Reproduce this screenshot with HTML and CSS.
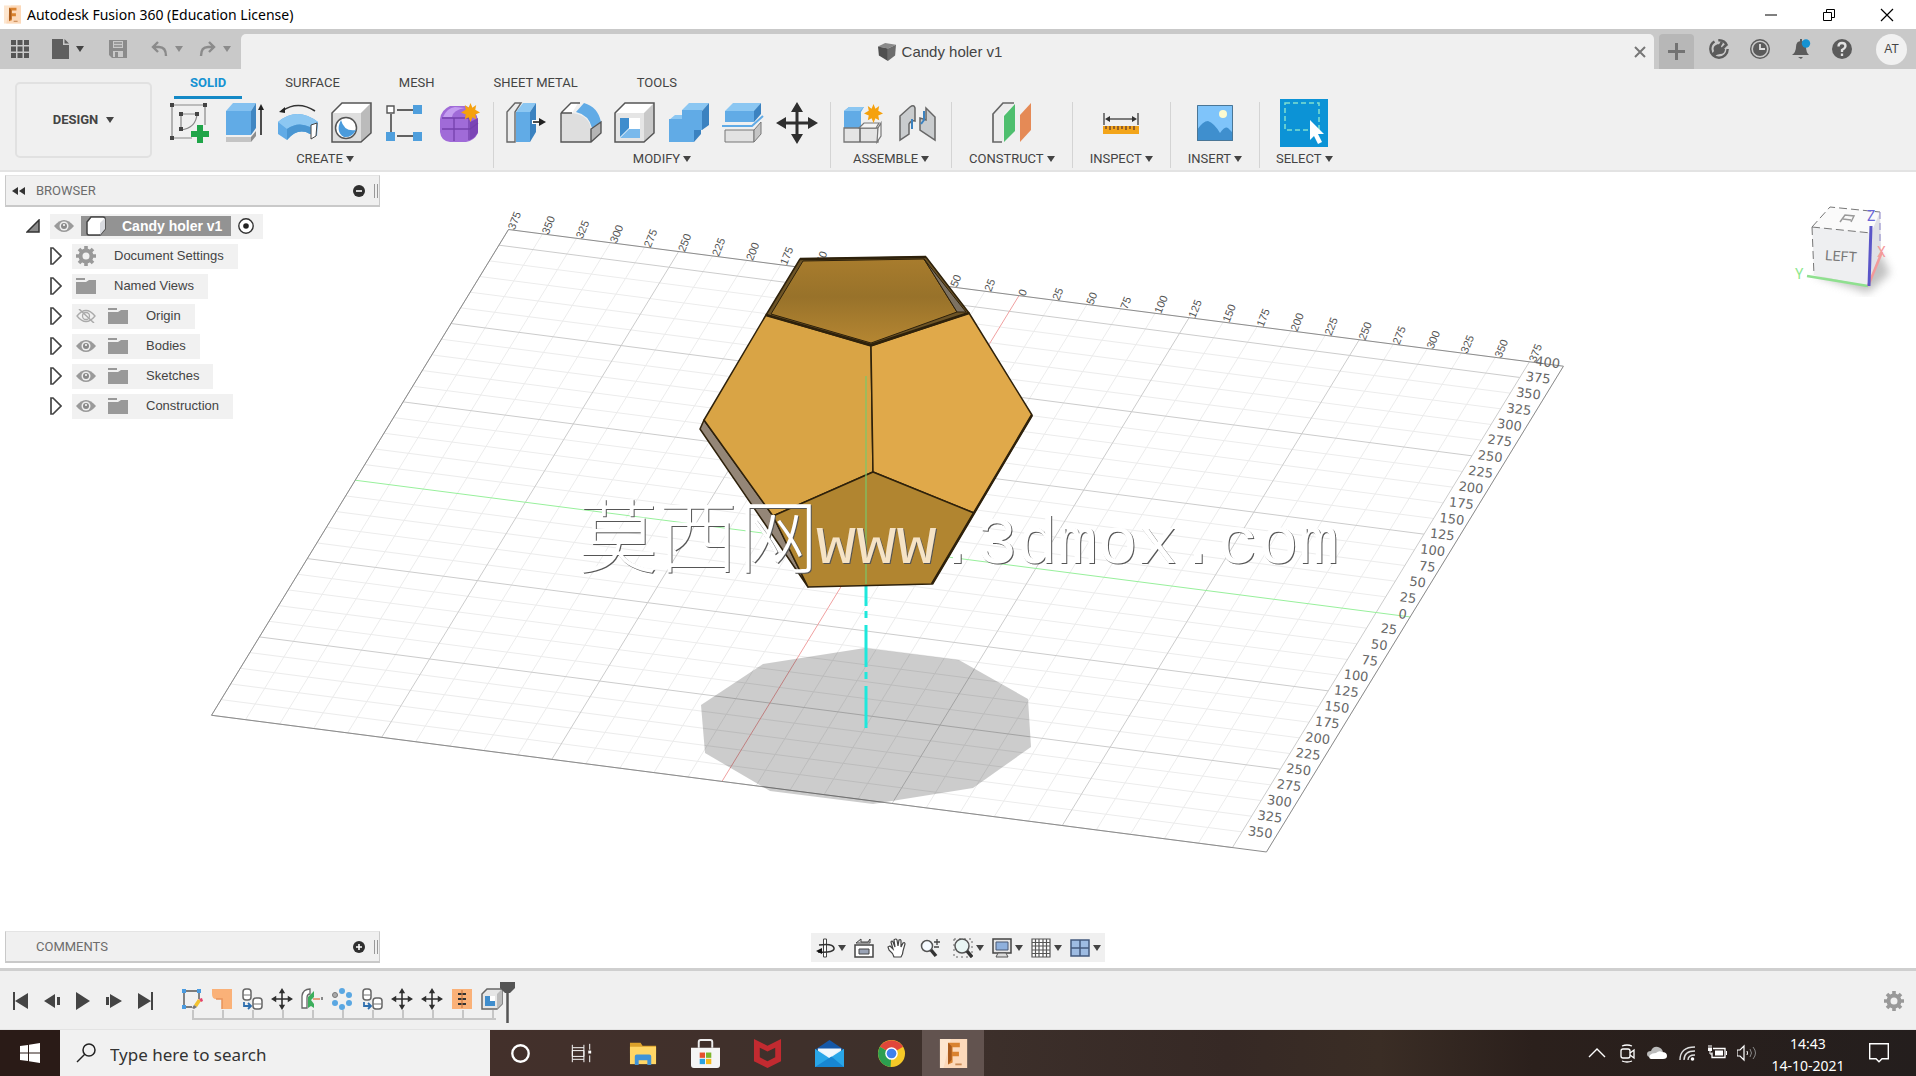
FILE: index.html
```html
<!DOCTYPE html>
<html lang="en">
<head>
<meta charset="utf-8">
<title>Autodesk Fusion 360 (Education License)</title>
<link rel="stylesheet" href="styles.css">
</head>
<body>

<svg class="defs" aria-hidden="true">
  <symbol id="i-fusion" viewBox="0 0 30 32"><rect width="30" height="32" fill="#fde6cf"/><path d="M4 32 12 0h18v32z" fill="#fbd3b0" opacity=".7"/><path d="M9 4h13v5h-8v5h7v5h-7v7l-5 2z" fill="#d9822f"/><path d="M9 4l4 4v15l-4 5z" fill="#a85a1c"/><path d="M17 28h7" stroke="#c98a55" stroke-width="2"/></symbol>
  <symbol id="i-eye" viewBox="0 0 20 14"><path d="M0 7Q10-5 20 7 10 19 0 7z" fill="#9a9a9a"/><circle cx="10" cy="7" r="4.500" fill="#efefef"/><circle cx="10" cy="7" r="3" fill="#8a8a8a"/><circle cx="10" cy="6" r="1" fill="#fff"/></symbol>
  <symbol id="i-eye-off" viewBox="0 0 20 14"><path d="M1 7Q10-4 19 7 10 18 1 7z" fill="none" stroke="#aaa" stroke-width="1.300"/><circle cx="10" cy="7" r="3.500" fill="none" stroke="#aaa" stroke-width="1.300"/><path d="M3 0l15 14" stroke="#aaa" stroke-width="1.500"/></symbol>
  <symbol id="i-folder" viewBox="0 0 20 16"><path d="M0 0h9v2H0zM0 4h10l3-2h7v14H0z" fill="#999"/></symbol>
  <symbol id="i-gear" viewBox="0 0 20 20"><circle cx="10" cy="10" r="5.500" fill="none" stroke="#999" stroke-width="4"/><path d="M10 0v4M10 16v4M0 10h4M16 10h4M3 3l3 3M14 14l3 3M17 3l-3 3M6 14l-3 3" stroke="#999" stroke-width="3.600"/></symbol>
  <symbol id="i-expand" viewBox="0 0 12 18"><path d="M1 1h2l8 8-8 8H1z" fill="#fff" stroke="#444" stroke-width="1.700"/></symbol>
  <symbol id="i-move" viewBox="0 0 42 42"><path d="M21 6v30M6 21h30" stroke="#2f2f2f" stroke-width="3"/><path d="M21 0l6 10H15zM21 42l6-10H15zM0 21l10-6v12zM42 21l-10-6v12z" fill="#2f2f2f"/></symbol>
  <symbol id="i-star" viewBox="0 0 20 20"><path d="M10 0l2 5 4-3-1 5 5 3-5 2 1 5-4-2-2 5-2-5-4 2 1-5-5-2 5-3-1-5 4 3z" fill="#f5a10d"/></symbol>
  <symbol id="i-copy" viewBox="0 0 22 22"><rect x="2" y="1" width="8" height="11" rx="3" fill="#fff" stroke="#666" stroke-width="1.500"/><path d="M2 7h8" stroke="#777"/><rect x="12" y="10" width="9" height="11" rx="3" fill="#fff" stroke="#666" stroke-width="1.500"/><path d="M12 16h9" stroke="#777"/><path d="M3 14v4h6M7 15l3 3-3 3" fill="none" stroke="#2f6fae" stroke-width="1.800"/></symbol>
</svg>

<header class="titlebar">
  <svg class="logo"><use href="#i-fusion"/></svg>
  <h1 class="app-name">Autodesk Fusion 360 (Education License)</h1>
  <div class="window-controls">
    <button aria-label="Minimize"><svg viewBox="0 0 14 14"><path d="M1 7h12" stroke="#000"/></svg></button>
    <button aria-label="Restore"><svg viewBox="0 0 14 14"><path d="M1.500 4.500h8v8h-8zM4.500 4V1.500h8v8H10" fill="none" stroke="#000"/></svg></button>
    <button aria-label="Close"><svg viewBox="0 0 14 14"><path d="M1 1l12 12M13 1L1 13" stroke="#000" stroke-width="1.200"/></svg></button>
  </div>
</header>

<div class="appbar">
  <div class="quick">
    <button class="q-grid" aria-label="Data panel"><svg width="18" height="18" viewBox="0 0 18 18" fill="#555"><path d="M0 0h5v5H0zM6.500 0h5v5h-5zM13 0h5v5h-5zM0 6.500h5v5H0zM6.500 6.500h5v5h-5zM13 6.500h5v5h-5zM0 13h5v5H0zM6.500 13h5v5h-5zM13 13h5v5h-5z"/></svg></button>
    <button class="q-file" aria-label="File"><svg width="17" height="20" viewBox="0 0 17 20"><path d="M0 0h11v6h6v14H0z" fill="#5f5f5f"/><path d="M12.500 0l4.500 4.500h-4.500z" fill="#5f5f5f"/></svg><span class="caret"></span></button>
    <button class="q-save" aria-label="Save"><svg width="18" height="18" viewBox="0 0 18 18"><path d="M0 0h18v18H3l-3-3z" fill="#8b8b8b"/><path d="M4 1h10v7H4zM4 11h10v6H4z" fill="#c9c9c9"/><path d="M5 3h8M5 6h8" stroke="#8b8b8b" stroke-width="1.500"/><path d="M6 12h3v5H6z" fill="#8b8b8b"/></svg></button>
    <button class="q-undo" aria-label="Undo"><svg width="17" height="16" viewBox="0 0 17 16"><path d="M7 1L2 6l5 5M2 6h6q7 0 7 9" fill="none" stroke="#8b8b8b" stroke-width="2.400"/></svg><span class="caret pale"></span></button>
    <button class="q-redo" aria-label="Redo"><svg width="17" height="16" viewBox="0 0 17 16"><path d="M10 1l5 5-5 5M15 6H9q-7 0-7 9" fill="none" stroke="#8b8b8b" stroke-width="2.400"/></svg><span class="caret pale"></span></button>
  </div>
  <div class="doc-tab">
    <div class="doc-name"><svg width="20" height="18" viewBox="0 0 20 20"><path d="M0 4l8-4 12 2-9 4z" fill="#8a8a8a"/><path d="M0 4l11 2v14L1 14z" fill="#4f4f4f"/><path d="M11 6l9-4-1 12-8 6z" fill="#6c6c6c"/></svg><span>Candy holer v1</span></div>
    <button class="doc-close" aria-label="Close document"><svg width="12" height="12" viewBox="0 0 12 12"><path d="M1 1l10 10M11 1L1 11" stroke="#777" stroke-width="2"/></svg></button>
  </div>
  <button class="new-tab" aria-label="New design"><svg width="17" height="17" viewBox="0 0 17 17"><path d="M8.500 0v17M0 8.500h17" stroke="#737373" stroke-width="3"/></svg></button>
  <div class="status">
    <button aria-label="Extensions"><svg viewBox="0 0 20 20"><circle cx="10" cy="10" r="8.700" fill="none" stroke="#5b5b5b" stroke-width="2.400" stroke-dasharray="36 4 11 4"/><path d="M5 12q-2-5 4-7l2 1 2 3 3 1q0 5-5 5-3 0-6 3l-2-3z" fill="#5b5b5b"/><path d="M10 8l3-5M13 10l4-4" stroke="#5b5b5b" stroke-width="2.600"/></svg></button>
    <button aria-label="Job status"><svg viewBox="0 0 20 20"><circle cx="10" cy="10" r="9.300" fill="none" stroke="#5b5b5b" stroke-width="1.400"/><circle cx="10" cy="10" r="7" fill="#5b5b5b"/><path d="M10 5v5h5" fill="none" stroke="#ddd" stroke-width="1.800"/></svg></button>
    <button aria-label="Notifications"><svg viewBox="0 0 20 20"><path d="M1 16q4-3 4-8 0-6 5-6t5 6q0 5 3 8zM7 18h5l-2 2z" fill="#5b5b5b"/><path d="M9 0h2v3H9z" fill="#5b5b5b"/><circle cx="15" cy="4.500" r="4.200" fill="#1592d2"/></svg></button>
    <button aria-label="Help"><svg viewBox="0 0 20 20"><circle cx="10" cy="10" r="10" fill="#5b5b5b"/><path d="M6.500 7.500q0-3.500 3.500-3.500t3.500 3q0 2-3.500 4v2M10 14.500v2.500" fill="none" stroke="#e2e2e2" stroke-width="2.300"/></svg></button>
    <button class="avatar">AT</button>
  </div>
</div>

<div class="ribbon">
  <button class="design">DESIGN <span class="caret"></span></button>
  <div class="tools">
    <nav class="tabs">
      <button class="tab active">SOLID</button>
      <button class="tab">SURFACE</button>
      <button class="tab">MESH</button>
      <button class="tab">SHEET METAL</button>
      <button class="tab">TOOLS</button>
    </nav>
    <div class="groups">
      <section class="group">
        <div class="icons">
          <button aria-label="Create sketch"><svg viewBox="0 0 42 42"><path d="M3 3h33v20M3 3v33h20" fill="none" stroke="#888" stroke-width="1.200"/><path d="M12 12h16q-1 14-16 16z" fill="none" stroke="#888" stroke-width="1.200"/><path d="M1 1h4v4H1zM34 1h4v4h-4zM1 34h4v4H1zM10 10h4v4h-4zM26 10h4v4h-4zM10 25h4v4h-4z" fill="#444"/><path d="M28 23h6v6h6v6h-6v6h-6v-6h-6v-6h6z" fill="#1fa548"/></svg></button>
          <button aria-label="Extrude"><svg viewBox="0 0 42 42"><path d="M3 9l7-8h23l-5 8z" fill="#84c1f0"/><path d="M3 9h25v24H3z" fill="#61abe6"/><path d="M28 9l5-8v25l-5 7z" fill="#4187c2"/><path d="M3 35h25v5H3z" fill="#c4c4c4"/><path d="M28 35l5-6v5l-5 6z" fill="#8d8d8d"/><path d="M38 33V6" stroke="#222" stroke-width="1.600"/><path d="M38 2l3 6h-6z" fill="#222"/></svg></button>
          <button aria-label="Revolve"><svg viewBox="0 0 42 42"><path d="M1 20q19-16 40 0l-1 14-7-2q-12-7-23 6L1 32z" fill="#61abe6"/><path d="M1 20q19-16 40 0l-8 5q-12-6-23 2z" fill="#8cc7f2"/><path d="M10 27q11-8 23-2v7q-12-7-23 6z" fill="#4a96d2"/><path d="M34 23l6-2-1 13-5 3z" fill="#fff" stroke="#444"/><path d="M5 9Q21-2 38 9" fill="none" stroke="#333" stroke-width="1.600"/><path d="M2 10l6-5v6z" fill="#222"/></svg></button>
          <button aria-label="Hole"><svg viewBox="0 0 42 42"><path d="M1 11L11 1h29L30 11z" fill="#fff"/><path d="M1 11h29v29H1z" fill="#dedede"/><path d="M30 11L40 1v30l-10 9z" fill="#bbb"/><path d="M1 11L11 1h29v30l-10 9H1z" fill="none" stroke="#555" stroke-width="1.500"/><circle cx="15" cy="26" r="10.500" fill="#fff" stroke="#555" stroke-width="1.500"/><path d="M10 18q3 12 15 10-4 8-12 7-9-5-3-17z" fill="#4a9bdc"/></svg></button>
          <button aria-label="Pattern"><svg viewBox="0 0 42 42"><path d="M12 8h20M6 12v20M12 34h18" stroke="#333" stroke-width="1.400"/><path d="M2 4h7v7H2z" fill="#fff" stroke="#555" stroke-width="1.400"/><path d="M28 3h9v9h-9zM1 30h9v9H1zM28 30h9v9h-9z" fill="#4f9fdd"/></svg></button>
          <button aria-label="Create form"><svg viewBox="0 0 42 42"><path d="M1 17Q2 8 11 4h16q11 4 12 15v12q-4 8-12 9H11Q2 39 1 30z" fill="#a06bd8"/><path d="M4 15q4-9 12-10l10 1q-12 2-13 9z" fill="#c49df0"/><path d="M31 20l8-4v14q-2 5-8 8z" fill="#7b45b6"/><path d="M3 27h28l8-6M15 16v23M3 16h27v22" fill="none" stroke="#7441ac" stroke-width="1.300"/><use href="#i-star" x="22" y="1" width="19" height="19"/></svg></button>
        </div>
        <button class="label">CREATE <span class="caret"></span></button>
      </section>
      <section class="group">
        <div class="icons">
          <button aria-label="Press pull"><svg viewBox="0 0 42 42"><path d="M1 10l8-9h6L9 10v30H1z" fill="#ececec" stroke="#666" stroke-width="1.400"/><path d="M10 10h14v30H10z" fill="#61abe6"/><path d="M10 10l7-9h13l-6 9z" fill="#8cc7f2"/><path d="M24 10l6-9v29l-6 10z" fill="#3b82c0"/><path d="M26 20h12" stroke="#fff" stroke-width="4"/><path d="M27 20h8" stroke="#222" stroke-width="1.600"/><path d="M33 16l7 4-7 4z" fill="#222"/></svg></button>
          <button aria-label="Fillet"><svg viewBox="0 0 42 42"><path d="M1 11L11 1h7l-6 10z" fill="#fff"/><path d="M1 11h11q17 2 19 16v13H1z" fill="#dedede"/><path d="M31 27l10-7v11l-10 9z" fill="#b5b5b5"/><path d="M16 10l8-9q14 4 17 19l-9 6Q29 13 16 10z" fill="#61abe6"/><path d="M1 11L11 1h9M1 11v29h30l10-9V20l-10 7v13M1 11h11" fill="none" stroke="#555" stroke-width="1.400"/></svg></button>
          <button aria-label="Shell"><svg viewBox="0 0 42 42"><path d="M1 11L11 1h29v30l-10 9H1z" fill="#c9c9c9"/><path d="M1 11h29v29H1z" fill="#e5e5e5"/><path d="M1 11L11 1h29L30 11z" fill="#fff"/><path d="M6 16h20v20H6z" fill="#fff"/><path d="M6 16h9v10l-9 9z" fill="#3f8dcd"/><path d="M6 36l9-9h11v9z" fill="#79b9ec"/><path d="M1 11L11 1h29v30l-10 9H1z" fill="none" stroke="#555" stroke-width="1.500"/></svg></button>
          <button aria-label="Combine"><svg viewBox="0 0 42 42"><path d="M14 8l7-7h20l-7 8zM1 18l6-5h8l-1 5z" fill="#8cc7f2"/><path d="M14 8h20v20h-8v12H1V17h13z" fill="#61abe6"/><path d="M34 9l7-8v22l-7 5zM26 28h7v4l-7 8z" fill="#3b82c0"/></svg></button>
          <button aria-label="Split body"><svg viewBox="0 0 42 42"><path d="M3 9l8-8h28l-7 9z" fill="#8cc7f2"/><path d="M3 9h29v11H3z" fill="#61abe6"/><path d="M32 9l7-8v11l-7 8z" fill="#3b82c0"/><path d="M0 24h30L41 14" fill="none" stroke="#61abe6" stroke-width="2"/><path d="M3 28h29v12H3z" fill="#e2e2e2" stroke="#777"/><path d="M32 28l7-8v12l-7 8z" fill="#c5c5c5" stroke="#777"/></svg></button>
          <button aria-label="Move"><svg><use href="#i-move"/></svg></button>
        </div>
        <button class="label">MODIFY <span class="caret"></span></button>
      </section>
      <section class="group">
        <div class="icons">
          <button aria-label="New component"><svg viewBox="0 0 42 42"><path d="M1 9l5-4h15l-3 5v16H1z" fill="#61abe6"/><path d="M1 9l5-4h15l-4 4z" fill="#8cc7f2"/><path d="M1 26h34v14H1z" fill="#e4e4e4" stroke="#777" stroke-width="1.300"/><path d="M16 26l5-5h15l-3 5zM35 26l3-5v13l-4 6z" fill="#f4f4f4" stroke="#777" stroke-width="1.200"/><path d="M17 26v14" stroke="#666" stroke-width="1.500"/><use href="#i-star" x="21" y="2" width="19" height="19"/></svg></button>
          <button aria-label="Joint"><svg viewBox="0 0 42 42"><path d="M3 14L13 5q4-3 5 1v13q-4-1-6 3v10l-9 6z" fill="#c9ccce" stroke="#666" stroke-width="1.500"/><path d="M38 38V15L29 6v12l-6-2v12z" fill="#c9ccce" stroke="#666" stroke-width="1.500"/><path d="M15 17v10M27 9v9l-3 4" fill="none" stroke="#3b82c0" stroke-width="2"/></svg></button>
        </div>
        <button class="label">ASSEMBLE <span class="caret"></span></button>
      </section>
      <section class="group roomy">
        <div class="icons">
          <button aria-label="Construction plane"><svg viewBox="0 0 42 42"><path d="M2 40V12L12 1h11L12 12v28z" fill="#ececec"/><path d="M11 40H2V12L12 1h11" fill="none" stroke="#666" stroke-width="1.700"/><path d="M13 14L24 2v27L13 40z" fill="#4fbf6e"/><path d="M29 13L40 1v27L29 40z" fill="#e58a56"/></svg></button>
        </div>
        <button class="label">CONSTRUCT <span class="caret"></span></button>
      </section>
      <section class="group roomy">
        <div class="icons">
          <button aria-label="Measure"><svg viewBox="0 0 42 42"><path d="M4 11v12M38 11v12M7 17h28" stroke="#555" stroke-width="1.500"/><path d="M5 17l5-3v6zM37 17l-5-3v6z" fill="#333"/><path d="M3 24h36v8H3z" fill="#f3a51a"/><path d="M6 24v3M10 24v4M14 24v3M18 24v4M22 24v3M26 24v4M30 24v3M34 24v4" stroke="#533" stroke-width="1.200"/></svg></button>
        </div>
        <button class="label">INSPECT <span class="caret"></span></button>
      </section>
      <section class="group roomy">
        <div class="icons">
          <button aria-label="Insert image"><svg viewBox="0 0 42 42"><path d="M3 3h36v36H3z" fill="#7fc4fa"/><path d="M3 28q6-9 11-9 6 2 12 12 5-7 8-5l5 5v8H3z" fill="#3f8fce"/><circle cx="29" cy="12" r="4" fill="#fdfbd0"/><path d="M3.500 3.500h35v35h-35z" fill="none" stroke="#4a7696"/></svg></button>
        </div>
        <button class="label">INSERT <span class="caret"></span></button>
      </section>
      <section class="group last">
        <div class="icons">
          <button class="selected" aria-label="Select"><svg viewBox="0 0 48 48"><path d="M0 0h48v48H0z" fill="#0c93d6"/><path d="M5 4h34v27H5z" fill="none" stroke="#7fe0d0" stroke-width="1.500" stroke-dasharray="5 3"/><path d="M30 21v20l4-4 4 8 4-2-4-8h6z" fill="#fff"/></svg></button>
        </div>
        <button class="label">SELECT <span class="caret"></span></button>
      </section>
    </div>
  </div>
</div>

<main class="workspace">
  <svg class="scene" viewBox="0 172 1916 796" role="img" aria-label="Candy holer model on the ground grid">
    <defs><linearGradient id="inside" x1="0" y1="0" x2="0" y2="1"><stop offset="0" stop-color="#a87c2d"/><stop offset=".45" stop-color="#98722a"/><stop offset="1" stop-color="#b58632"/></linearGradient></defs>
    <g id="grid"></g>
    <path class="shadow" d="M865 648l94 12 69 39 3 48-58 41-100 16-103-13-65-38-4-48 62-41z"/>
    <g id="labels"></g>
    <path d="M866 728V586" stroke="#1ee8dc" stroke-width="3" stroke-dasharray="42 7 7 5"/>
    <g stroke="#2e210b" stroke-width="1.500" stroke-linejoin="round">
      <path d="M704 420l-4 9 108 158-35-71z" fill="#948677"/>
      <path d="M766 315l34-56 126-2 43 56-98 33z" fill="#6d5426"/>
      <path d="M771 314l32-53 121-2 33 53-86 31z" fill="url(#inside)" stroke-width="1"/>
      <path d="M924 259l33 53 9 0z" fill="#7d7262" stroke-width="1"/>
      <path d="M766 315l105 31 2 126-100 44-69-96z" fill="#d9a445"/>
      <path d="M871 346l98-33 63 102-58 98-101-41z" fill="#e0a94a"/>
      <path d="M773 516l100-44 101 41-42 71-124 3z" fill="#b18530"/>
      <path d="M766 315l105 30 98-32M1032 415l-58 98-42 71M800 259l126-2" fill="none" stroke-width="2.500"/>
    </g>
    <path d="M866 376v208" stroke="#79c96a" stroke-width="2" opacity=".6"/>
    <g class="watermark"><text class="wm-cjk" x="578" y="566">莫西网</text><text class="wm-latin" x="816" y="563"><tspan class="wm-cream">www</tspan>.3dmox.com</text></g>
  </svg>

  <aside class="left-panels">
    <div class="browser">
      <div class="panel-head">
        <svg width="13" height="8" viewBox="0 0 13 8"><path d="M6 0v8L0 4zM13 0v8L7 4z" fill="#333"/></svg>
        <h2>BROWSER</h2>
        <button class="toggle" aria-label="Collapse browser"><svg viewBox="0 0 12 12"><circle cx="6" cy="6" r="6" fill="#2f2f2f"/><path d="M3 6h6" stroke="#fff" stroke-width="1.600"/></svg></button>
        <span class="grip"></span>
      </div>
      <ul class="tree">
        <li class="root"><svg class="exp-open" viewBox="0 0 14 14"><path d="M1 13L13 1v12z" fill="#8b8b8b" stroke="#333" stroke-width="1.500"/></svg>
          <div class="node"><svg class="eye"><use href="#i-eye"/></svg><span class="current"><svg width="22" height="20" viewBox="0 0 22 20"><path d="M2 6l4-5h12q2 0 2 2v10l-5 6H4q-2 0-2-2z" fill="#fff" stroke="#444" stroke-width="1.500"/><path d="M15 7l5-5v11l-5 6z" fill="#d9dbe0"/></svg>Candy holer v1</span><svg class="radio" viewBox="0 0 16 16"><circle cx="8" cy="8" r="7.200" fill="#fff" stroke="#333" stroke-width="1.400"/><circle cx="8" cy="8" r="2.800" fill="#222"/></svg></div></li>
        <li><svg class="exp"><use href="#i-expand"/></svg><div class="node"><svg class="gear"><use href="#i-gear"/></svg><span>Document Settings</span></div></li>
        <li><svg class="exp"><use href="#i-expand"/></svg><div class="node"><svg class="folder"><use href="#i-folder"/></svg><span>Named Views</span></div></li>
        <li><svg class="exp"><use href="#i-expand"/></svg><div class="node"><svg class="eye"><use href="#i-eye-off"/></svg><svg class="folder"><use href="#i-folder"/></svg><span>Origin</span></div></li>
        <li><svg class="exp"><use href="#i-expand"/></svg><div class="node"><svg class="eye"><use href="#i-eye"/></svg><svg class="folder"><use href="#i-folder"/></svg><span>Bodies</span></div></li>
        <li><svg class="exp"><use href="#i-expand"/></svg><div class="node"><svg class="eye"><use href="#i-eye"/></svg><svg class="folder"><use href="#i-folder"/></svg><span>Sketches</span></div></li>
        <li><svg class="exp"><use href="#i-expand"/></svg><div class="node"><svg class="eye"><use href="#i-eye"/></svg><svg class="folder"><use href="#i-folder"/></svg><span>Construction</span></div></li>
      </ul>
    </div>
    <div class="panel-head comments">
      <h2>COMMENTS</h2>
      <button class="toggle" aria-label="Expand comments"><svg viewBox="0 0 12 12"><circle cx="6" cy="6" r="6" fill="#2f2f2f"/><path d="M3 6h6M6 3v6" stroke="#fff" stroke-width="1.600"/></svg></button>
      <span class="grip"></span>
    </div>
  </aside>

  <svg class="viewcube" viewBox="1786 190 120 120" role="img" aria-label="View cube">
    <defs><filter id="soft"><feGaussianBlur stdDeviation="4"/></filter></defs>
    <path d="M1814 275l54 18 22-20-10-20z" fill="#999" opacity=".6" filter="url(#soft)"/>
    <path d="M1812 227l18-20 50 5-9 21z" fill="#fafafa"/><path d="M1812 227l59 6-3 53-54-11z" fill="#eeeff1"/><path d="M1871 233l9-21 1 38-13 36z" fill="#dfe0e6"/>
    <path d="M1812 227l18-20 50 5M1812 227l59 6M1812 227l2 48" fill="none" stroke="#777" stroke-dasharray="8 4"/>
    <path d="M1880 212v32" stroke="#8a84c8" stroke-dasharray="7 4"/>
    <path d="M1807 276l61 10" stroke="#8fe08f" stroke-width="2.500"/><path d="M1868 286l14-34" stroke="#f39a9a" stroke-width="2.500"/><path d="M1871 226l-2 60" stroke="#5a55c8" stroke-width="3"/>
    <path d="M1840 222l5-7 9 1-3 6M1843 219l8 1" fill="none" stroke="#999" stroke-width="1.500"/>
    <text class="face" transform="rotate(4 1841 256)" x="1841" y="261">LEFT</text>
    <text class="axis-y" x="1795" y="279">Y</text><text class="axis-z" x="1867" y="221">Z</text><text class="axis-x" x="1877" y="257">X</text>
  </svg>

  <div class="navbar">
    <button aria-label="Orbit"><svg viewBox="0 0 20 20"><path d="M8.500 1h3v18h-3z" fill="#fff" stroke="#444"/><path d="M4 7Q18 5 19 10t-16 4" fill="none" stroke="#333" stroke-width="1.500"/><path d="M1 13l6-3v6z" fill="#111"/></svg><span class="caret"></span></button>
    <button aria-label="Look at"><svg viewBox="0 0 20 20"><path d="M1 7h18v12H1z" fill="#fff" stroke="#444" stroke-width="1.500"/><path d="M5 11h10v5H5z" fill="#9aa3b5" stroke="#444"/><path d="M2 5l5-4v3h7l2-3v4z" fill="#ddd" stroke="#444"/></svg></button>
    <button aria-label="Pan"><svg viewBox="0 0 20 20"><path d="M7 19q-1-4-5-7l-1-3 2-1 3 3-2-7q1-2 2 0l2 5-1-7q2-2 3 0l1 6 1-6q2-1 2 1l0 6 2-4q2-1 2 1l-2 7q0 3-2 6z" fill="#fff" stroke="#444" stroke-width="1.200"/></svg></button>
    <button aria-label="Zoom"><svg viewBox="0 0 20 20"><circle cx="7" cy="8" r="5.500" fill="#f6fbff" stroke="#555" stroke-width="1.500"/><path d="M11 12l5 6" stroke="#333" stroke-width="3.500"/><path d="M14 4h6M17 1v6M14 9h5" stroke="#444" stroke-width="1.300"/></svg></button>
    <button aria-label="Fit"><svg viewBox="0 0 20 20"><path d="M1 1h18v18H1z" fill="none" stroke="#666" stroke-dasharray="2 3"/><circle cx="9" cy="8" r="7" fill="#e8f5f3" stroke="#555" stroke-width="1.500"/><path d="M14 13l5 6" stroke="#333" stroke-width="3.500"/></svg><span class="caret"></span></button>
    <button aria-label="Display settings"><svg viewBox="0 0 20 20"><path d="M1 1h18v14H1z" fill="#e6e6e6" stroke="#444" stroke-width="1.500"/><path d="M4 4h12v8H4z" fill="#8eb0dd" stroke="#4a5a77"/><path d="M6 15h8l2 4H4z" fill="#ddd" stroke="#555"/></svg><span class="caret"></span></button>
    <button aria-label="Grid settings"><svg viewBox="0 0 20 20"><path d="M1 1h18v18H1zM4.500 1v18M8 1v18M12 1v18M15.500 1v18M1 4.500h18M1 8h18M1 12h18M1 15.500h18" fill="#fff" stroke="#555" stroke-width="1.200"/></svg><span class="caret"></span></button>
    <button aria-label="Viewports"><svg viewBox="0 0 20 20"><path d="M1 2h18v16H1z" fill="#9dbbe2" stroke="#43597d" stroke-width="1.500"/><path d="M10 2v16M1 10h18" stroke="#43597d" stroke-width="1.500"/></svg><span class="caret"></span></button>
  </div>
</main>

<footer class="timeline">
  <div class="playback">
    <button aria-label="Go to start"><svg viewBox="0 0 18 18"><path d="M1 0h2v18H1zM16 1v16L3 9z" fill="#444"/></svg></button>
    <button aria-label="Step back"><svg viewBox="0 0 18 18"><path d="M12 2v14L1 9zM14 5h3v8h-3z" fill="#444"/></svg></button>
    <button aria-label="Play"><svg viewBox="0 0 18 18"><path d="M2 0v18l14-9z" fill="#444"/></svg></button>
    <button aria-label="Step forward"><svg viewBox="0 0 18 18"><path d="M5 2v14l12-7zM1 5h3v8H1z" fill="#444"/></svg></button>
    <button aria-label="Go to end"><svg viewBox="0 0 18 18"><path d="M15 0h2v18h-2zM2 1v16l13-8z" fill="#444"/></svg></button>
  </div>
  <div class="features">
    <button aria-label="Sketch"><svg viewBox="0 0 22 22"><path d="M3 3h15v8M3 3v16h8" fill="none" stroke="#555" stroke-width="1.400"/><path d="M1 1h4v4H1zM16 1h4v4h-4zM1 17h4v4H1z" fill="#4a9be0"/><path d="M13 17l4-6 3 2-4 6z" fill="#f2c230"/><path d="M18 11l3-1 1 3-2 1z" fill="#e5446d"/><path d="M11 20l2-3 3 2-3 2z" fill="#777"/></svg></button>
    <button aria-label="Patch"><svg viewBox="0 0 22 22"><path d="M1 1h20v20H11v-10H5q-4 0-4-5z" fill="#fab178"/><path d="M11 21V11H5" fill="none" stroke="#e8925a" stroke-width="1.500"/></svg></button>
    <button aria-label="Copy body"><svg><use href="#i-copy"/></svg></button>
    <button aria-label="Move"><svg><use href="#i-move"/></svg></button>
    <button aria-label="Mirror"><svg viewBox="0 0 22 22"><path d="M1 20V8q1-7 8-7v5q-3 0-3 4v10z" fill="#fff" stroke="#666" stroke-width="1.300"/><path d="M7 20V9l6-6v6l-3 3 3 4v4l-3-2z" fill="#3cae5c"/><path d="M12 11h7" stroke="#e07b52" stroke-width="1.400"/><path d="M20 9h2v3h-2z" fill="#888"/></svg></button>
    <button aria-label="Circular pattern"><svg viewBox="0 0 22 22" fill="#5aa7e2"><circle cx="11" cy="3" r="3"/><circle cx="18" cy="7" r="3"/><circle cx="18" cy="15" r="3"/><circle cx="11" cy="19" r="3"/><circle cx="4" cy="15" r="3"/><circle cx="4" cy="7" r="2.500" fill="#aaa" stroke="#777"/></svg></button>
    <button aria-label="Copy body"><svg><use href="#i-copy"/></svg></button>
    <button aria-label="Move"><svg><use href="#i-move"/></svg></button>
    <button aria-label="Move"><svg><use href="#i-move"/></svg></button>
    <button aria-label="Stitch"><svg viewBox="0 0 22 22"><path d="M1 1h20v20H1z" fill="#fab178"/><path d="M7 6h8M7 11h8M7 16h8" stroke="#333" stroke-width="1.800"/><path d="M11 2v18" stroke="#c97a45" stroke-width="1.200"/></svg></button>
    <button aria-label="Shell"><svg viewBox="0 0 22 22"><path d="M1 6l5-5h15v15l-5 5H1z" fill="#e6e6e6" stroke="#666" stroke-width="1.500"/><path d="M16 6l5-5v15l-5 5z" fill="#bbb"/><path d="M4 8h10v10H4z" fill="#fff"/><path d="M4 8h5v5h5v5H4z" fill="#3f8dcd"/></svg></button>
    <svg class="marker" viewBox="0 0 16 42"><path d="M0 0h15v6l-5 5H5L0 6z" fill="#555"/><path d="M7.500 8v33" stroke="#555" stroke-width="2.500"/></svg>
  </div>
  <button class="settings" aria-label="Timeline settings"><svg><use href="#i-gear"/></svg></button>
</footer>

<div class="taskbar">
  <button class="start" aria-label="Start"><svg width="20" height="20" viewBox="0 0 20 20" fill="#fff"><path d="M0 3l8-1v7.500H0zM9 1.800L20 0v9.500H9zM0 10.500h8V18l-8-1zM9 10.500h11V20L9 18.200z"/></svg></button>
  <label class="search"><svg width="20" height="20" viewBox="0 0 20 20"><circle cx="13" cy="7" r="6" fill="none" stroke="#222" stroke-width="1.500"/><path d="M9 11L1 19" stroke="#222" stroke-width="1.500"/></svg><input type="text" placeholder="Type here to search" aria-label="Type here to search"></label>
  <div class="apps">
    <button class="cortana" aria-label="Cortana"><svg viewBox="0 0 30 30"><circle cx="15" cy="15" r="8.500" fill="none" stroke="#fff" stroke-width="2.400"/></svg></button>
    <button aria-label="Task view"><svg viewBox="0 0 30 30"><path d="M5.500 6v3h12V6M5.500 24v-3h12v3M5.500 12h12v6h-12zM23.500 5v6M23.500 17v7M5.500 9v12M17.500 9v12" fill="none" stroke="#fff"/><path d="M22 12h3v3h-3z" fill="#fff"/></svg></button>
    <button aria-label="File Explorer"><svg viewBox="0 0 30 30"><path d="M1 4h11l2 3h14v8H1z" fill="#dba12b"/><path d="M1 8h27v18H1z" fill="#ffd666"/><path d="M6 27v-9q0-2 2-2h13q2 0 2 2v9h-4v-5h-9v5z" fill="#4093d8"/></svg></button>
    <button aria-label="Microsoft Store"><svg viewBox="0 0 30 30"><path d="M8 9V3q0-2 2-2h10q2 0 2 2v6" fill="none" stroke="#eee" stroke-width="2"/><path d="M0 9h30v18q0 3-3 3H3q-3 0-3-3z" fill="#f5f5f5"/><path d="M9 14h5.500v5.500H9z" fill="#e5502d"/><path d="M15.500 14H21v5.500h-5.500z" fill="#7db52c"/><path d="M9 20.500h5.500V26H9z" fill="#2aa2e2"/><path d="M15.500 20.500H21V26h-5.500z" fill="#f6b91c"/></svg></button>
    <button aria-label="McAfee"><svg viewBox="0 0 30 30"><path d="M1 0l14 7L29 0v23l-14 7-14-7zM7 9v10l8 4 8-4V9l-8 4z" fill="#c22a30" fill-rule="evenodd"/></svg></button>
    <button aria-label="Mail"><svg viewBox="0 0 30 30"><path d="M0 11L15 1l15 10z" fill="#1558a8"/><path d="M3 10h24v10H3z" fill="#e7f3fb"/><path d="M0 10l15 10L30 10v19H0z" fill="#29a6e8"/><path d="M0 29l17-11 13 11z" fill="#1786d2"/><path d="M3 10h24L15 19z" fill="#f1f8fd"/></svg></button>
    <button aria-label="Chrome"><svg viewBox="0 0 30 30"><circle cx="15" cy="15" r="14" fill="#f6c927"/><path d="M15 15L3 8a14 14 0 0 1 24 0z" fill="#e0463a"/><path d="M15 15L3 8a14 14 0 0 0 11 21z" fill="#2c9f50"/><circle cx="15" cy="15" r="6.500" fill="#fff"/><circle cx="15" cy="15" r="5" fill="#3f80ec"/></svg></button>
    <button class="running" aria-label="Fusion 360"><svg><use href="#i-fusion"/></svg></button>
  </div>
  <div class="tray">
    <button aria-label="Show hidden icons"><svg viewBox="0 0 20 20"><path d="M2 14l8-8 8 8" fill="none" stroke="#fff" stroke-width="1.400"/></svg></button>
    <button aria-label="Meet now"><svg viewBox="0 0 20 20"><rect x="4" y="6" width="9" height="9" rx="2" fill="none" stroke="#fff" stroke-width="1.300"/><path d="M13 10l4-3v8l-4-3M5 3q5-2 10 0M5 18q5 2 10 0" fill="none" stroke="#fff" stroke-width="1.300"/></svg></button>
    <button aria-label="OneDrive"><svg viewBox="0 0 20 20"><path d="M3 14q-3 0-3-3t4-3q2-5 7-4 4 1 5 5z" fill="#bbb"/><path d="M4 16q-3-1-1-4 2-2 6-2 3-3 6-1 5 0 5 4 0 3-4 3z" fill="#fff"/></svg></button>
    <button aria-label="Network"><svg viewBox="0 0 20 20"><path d="M3 17Q3 4 18 4M7 17q0-9 11-9M11 17q0-5 7-5" fill="none" stroke="#ddd" stroke-width="1.400"/><circle cx="15.500" cy="16" r="1.800" fill="#fff"/></svg></button>
    <button aria-label="Battery"><svg viewBox="0 0 20 20"><path d="M6 5.500h12v9H5v-5" fill="none" stroke="#fff" stroke-width="1.300"/><path d="M8 7.500h8v5H8zM19 8h1v4h-1zM1 5h4v3H1z" fill="#fff"/><path d="M2 2v3M4 2v3M3 8v3h2" stroke="#fff" fill="none"/></svg></button>
    <button aria-label="Volume"><svg viewBox="0 0 20 20"><path d="M0 7h3l4-4v14l-4-4H0z" fill="none" stroke="#fff" stroke-width="1.200"/><path d="M10 8q1 2 0 4" fill="none" stroke="#fff"/><path d="M13 6q3 4 0 8M16 4q5 6 0 12" fill="none" stroke="#888"/></svg></button>
    <div class="clock"><time>14:43</time><time>14-10-2021</time></div>
    <button class="action-center" aria-label="Notifications"><svg width="20" height="20" viewBox="0 0 20 20"><path d="M.7.700h18.600v15H13l-3 3-3-3H.7z" fill="none" stroke="#fff" stroke-width="1.400"/></svg></button>
  </div>
</div>

<script src="grid.js"></script>
</body>
</html>
```
FILE: grid.js
```js
// Draws the ground plane: 31 x 31 cells of 25 mm, seen in an orthographic view.
const NS = 'http://www.w3.org/2000/svg';
const CELLS = 31;
const ORIGIN_COL = 15;
const ORIGIN_ROW = 16;

const point = (col, row) => [
  508.5 + 34.03 * col - 9.58 * row,
  229.5 + 4.41 * col + 15.67 * row
];

const grid = document.getElementById('grid');
const labels = document.getElementById('labels');

function line(from, to, cls) {
  const el = document.createElementNS(NS, 'line');
  el.setAttribute('x1', from[0]);
  el.setAttribute('y1', from[1]);
  el.setAttribute('x2', to[0]);
  el.setAttribute('y2', to[1]);
  el.setAttribute('class', cls);
  grid.appendChild(el);
}

function label(value, x, y, angle, cls) {
  const el = document.createElementNS(NS, 'text');
  el.setAttribute('transform', `translate(${x} ${y}) rotate(${angle})`);
  el.setAttribute('class', cls);
  el.textContent = value;
  labels.appendChild(el);
}

function kind(offset, axis) {
  if (offset === 0) return axis;
  return offset % 5 === 0 ? 'major' : 'minor';
}

for (const pass of ['minor', 'major', 'axis']) {
  for (let i = 0; i <= CELLS; i++) {
    const col = kind(i - ORIGIN_COL, 'axis axis-red');
    const row = kind(i - ORIGIN_ROW, 'axis axis-green');
    // rows stop one cell short of the right edge, where the scale is written
    const end = pass === 'axis' ? CELLS : CELLS - 1;
    if (col.startsWith(pass)) line(point(i, 0), point(i, CELLS), col);
    if (row.startsWith(pass)) line(point(0, i), point(end, i), row);
  }
}
line(point(0, 0), point(CELLS, 0), 'edge');
line(point(CELLS, 0), point(CELLS, CELLS), 'edge');
line(point(CELLS, CELLS), point(0, CELLS), 'edge');
line(point(0, CELLS), point(0, 0), 'edge');

for (let i = 0; i < CELLS; i++) {
  // the body hides these
  if (i > 9 && i < 13) continue;
  const [x, y] = point(i, 0);
  label(Math.abs(i - ORIGIN_COL) * 25, x + 6, y + 1, -68, 'tick-top');
}
for (let i = 0; i < CELLS; i++) {
  const [x, y] = point(CELLS, i);
  label(Math.abs(i - ORIGIN_ROW) * 25, x - 4, y + 2, 7, 'tick-side');
}
```
FILE: styles.css
```css
* { box-sizing: border-box; }
body {
  margin: 0;
  min-height: 100vh;
  display: flex;
  flex-direction: column;
  background: #fff;
  color: #444;
  font: 13px/16px "Liberation Sans", Arial, sans-serif;
}
button {
  margin: 0;
  padding: 0;
  border: 0;
  background: none;
  color: inherit;
  font: inherit;
  display: flex;
  align-items: center;
  justify-content: center;
}
h1, h2, ul { margin: 0; padding: 0; font: inherit; }
svg { display: block; flex: none; }
.defs { position: absolute; width: 0; height: 0; }
.caret {
  border: 4px solid transparent;
  border-top: 6px solid #444;
  border-bottom: 0;
}
.caret.pale { border-top-color: #8b8b8b; }

/* Title bar */
.titlebar { display: flex; align-items: center; height: 29px; padding-left: 4px; gap: 6px; }
.logo { width: 17px; height: 19px; }
.app-name { color: #000; font: 14px/20px "Noto Sans", sans-serif; }
.window-controls { display: flex; margin-left: auto; }
.window-controls button { width: 58px; height: 29px; }
.window-controls svg { width: 14px; height: 14px; }

/* Quick access and document tab */
.appbar { display: flex; align-items: flex-end; height: 40px; background: #c9c9c9; }
.quick { display: flex; align-items: center; width: 241px; height: 40px; padding-left: 11px; }
.quick button { gap: 7px; }
.q-file { margin-left: 23px; }
.q-save { margin-left: 25px; }
.q-undo { margin-left: 24px; }
.q-redo { margin-left: 16px; }
.doc-tab {
  flex: 1;
  display: flex;
  align-items: center;
  height: 35px;
  padding-left: 12px;
  background: #f0f0f0;
  border-radius: 5px 5px 0 0;
}
.doc-name { flex: 1; display: flex; justify-content: center; align-items: center; gap: 5px; font-size: 15px; line-height: 20px; }
.doc-close { width: 28px; height: 35px; }
.new-tab { width: 35px; height: 35px; margin-left: 5px; background: #b7b7b7; border-radius: 4px 4px 0 0; }
.status { display: flex; align-items: center; height: 40px; padding: 0 9px 0 15px; gap: 21px; }
.status svg { width: 20px; height: 20px; }
.avatar { width: 31px; height: 31px; margin-left: 3px; border-radius: 50%; background: #f1f1f1; font-size: 12px; }

/* Ribbon */
.ribbon {
  display: flex;
  height: 103px;
  background: #f0f0f0;
  border-bottom: 2px solid #e3e3e3;
  font-family: Roboto, sans-serif;
}
.design {
  width: 137px;
  height: 76px;
  margin: 13px 5px 0 15px;
  border: 2px solid #e1e1e1;
  border-radius: 5px;
  font-weight: bold;
  gap: 8px;
}
.tools { flex: 1; }
.tabs { display: flex; gap: 27px; padding-left: 17px; }
.tab { height: 30px; padding: 0 16px; border-bottom: 3px solid transparent; }
.tab.active { color: #1592d2; font-weight: bold; border-color: #1489c6; }
.groups { display: flex; padding-top: 3px; }
.group { display: flex; flex-direction: column; align-items: center; height: 66px; padding: 0 12px; border-right: 1px solid #d4d4d4; }
.group.roomy { padding: 0 17px; }
.group.last { padding: 0 16px; border: 0; }
.icons { display: flex; gap: 12px; height: 42px; align-items: center; }
.icons svg { width: 42px; height: 42px; }
.icons .selected svg { width: 48px; height: 48px; }
.label { gap: 3px; height: 16px; margin-top: 7px; }

/* Workspace */
.workspace { position: relative; flex: 1; min-height: 600px; display: flex; flex-direction: column; align-items: center; justify-content: flex-end; padding-bottom: 6px; }
.scene { position: absolute; inset: 0; width: 100%; height: 100%; }
.minor { stroke: #ececec; }
.major { stroke: #cccccc; }
.axis-red { stroke: #f0a0a0; }
.axis-green { stroke: #98f09c; }
.edge { stroke: #8c8c8c; }
.shadow { fill: #000; opacity: .2; }
.tick-top { font: 11px "Liberation Sans", sans-serif; fill: #555; }
.tick-side { font: 13px "DejaVu Sans", sans-serif; fill: #666; text-anchor: end; }
.watermark { fill: #fff; filter: drop-shadow(1px 1px 0 #555); }
.wm-cjk { font: 300 80px "Noto Sans CJK SC", sans-serif; }
.wm-latin { font: 67px "Liberation Mono", monospace; }
.wm-cream { fill: #f5e3c6; }

.left-panels { position: absolute; top: 3px; bottom: 5px; left: 5px; width: 375px; display: flex; flex-direction: column; justify-content: space-between; }
.panel-head {
  display: flex;
  align-items: center;
  height: 32px;
  padding: 0 1px 0 6px;
  background: #f0f0f0;
  border: 1px solid #c9c9c9;
  border-top-color: #e4e4e4;
  border-bottom-width: 2px;
}
.panel-head h2 { flex: 1; margin-left: 11px; font-family: Roboto, sans-serif; color: #6c6c6c; }
.comments h2 { margin-left: 24px; }
.toggle svg { width: 12px; height: 12px; }
.grip { width: 4px; height: 14px; margin-left: 9px; border: solid #999; border-width: 0 1px; }
.tree { list-style: none; padding-top: 4px; }
.tree li { display: flex; align-items: center; height: 30px; padding-left: 45px; gap: 10px; }
.tree .root { padding-left: 21px; }
.exp { width: 12px; height: 18px; }
.exp-open { width: 14px; height: 14px; }
.node { display: flex; align-items: center; gap: 12px; height: 25px; padding: 0 14px 0 4px; background: #f1f1f1; }
.node > span:not(.current) { margin-left: 6px; }
.root .node { gap: 7px; padding: 0 9px 0 4px; }
.current { display: flex; align-items: center; gap: 15px; height: 20px; padding: 0 9px 0 4px; background: #939393; color: #fff; font-weight: bold; font-size: 14px; }
.eye { width: 20px; height: 14px; }
.folder { width: 20px; height: 16px; }
.gear { width: 20px; height: 20px; }
.radio { width: 16px; height: 16px; }

.viewcube { position: absolute; top: 18px; right: 10px; width: 120px; height: 120px; }
.face { font: 14px Roboto, sans-serif; fill: #777; text-anchor: middle; }
.axis-y, .axis-z, .axis-x { font: 14px Roboto, sans-serif; }
.axis-y { fill: #8fe88f; }
.axis-z { fill: #6a66d8; }
.axis-x { fill: #f59a9a; }

.navbar { position: relative; display: flex; align-items: center; height: 29px; padding: 0 4px; gap: 13px; background: #f0f0f0; }
.navbar svg { width: 20px; height: 20px; }
.navbar button { gap: 3px; }
.navbar button:has(.caret) { margin-right: -5px; }
.navbar button:last-child { margin-right: 0; }

/* Timeline */
.timeline { display: flex; height: 62px; padding: 0 12px; background: #f0f0f0; border-top: 3px solid #cfcfcf; border-bottom: 1px solid #e3e3e3; }
.playback { display: flex; align-items: center; gap: 13px; height: 60px; }
.playback svg { width: 18px; height: 18px; }
.features { position: relative; display: flex; gap: 8px; height: 50px; margin-left: 27px; padding-top: 17px; align-items: flex-start; }
.features button { position: relative; padding-bottom: 10px; }
.features button svg { width: 22px; height: 22px; }
.features button::after { content: ""; position: absolute; left: 11px; bottom: 0; width: 31px; height: 8px; border-left: 2px solid #c6c6c6; border-bottom: 2px solid #c6c6c6; }
.features button:nth-child(11)::after { width: 2px; }
.marker { position: absolute; right: -13px; top: 11px; width: 16px; height: 42px; }
.settings { margin-left: auto; height: 60px; }
.settings svg { width: 20px; height: 20px; }

/* Windows taskbar */
.taskbar { display: flex; height: 46px; color: #fff; background: linear-gradient(90deg, #2a1b17, #2a1b17 60px, #43302b 490px, #3d302b 50%, #362925 64%, #3a2d25 72%, #2b201c 80%, #241e1d); font-family: "Noto Sans", sans-serif; }
.start { width: 60px; }
.search { display: flex; align-items: center; gap: 14px; width: 430px; padding-left: 16px; background: #f1f1f1; }
.search input { flex: 1; min-width: 0; padding: 3px 0 0; border: 0; background: none; font: 17px/24px "Noto Sans", sans-serif; }
.search input::placeholder { color: #333; opacity: 1; }
.apps { display: flex; }
.apps button { width: 62px; }
.apps .cortana { width: 60px; }
.apps svg { width: 29px; height: 29px; }
.apps .running { background: #62534f; }
.tray { display: flex; align-items: center; margin-left: auto; padding-right: 27px; gap: 10px; }
.tray button svg { width: 20px; height: 20px; }
.clock { display: flex; flex-direction: column; align-items: center; width: 82px; padding-top: 3px; font-size: 14px; line-height: 22px; }
.action-center { margin-left: 10px; }
```
